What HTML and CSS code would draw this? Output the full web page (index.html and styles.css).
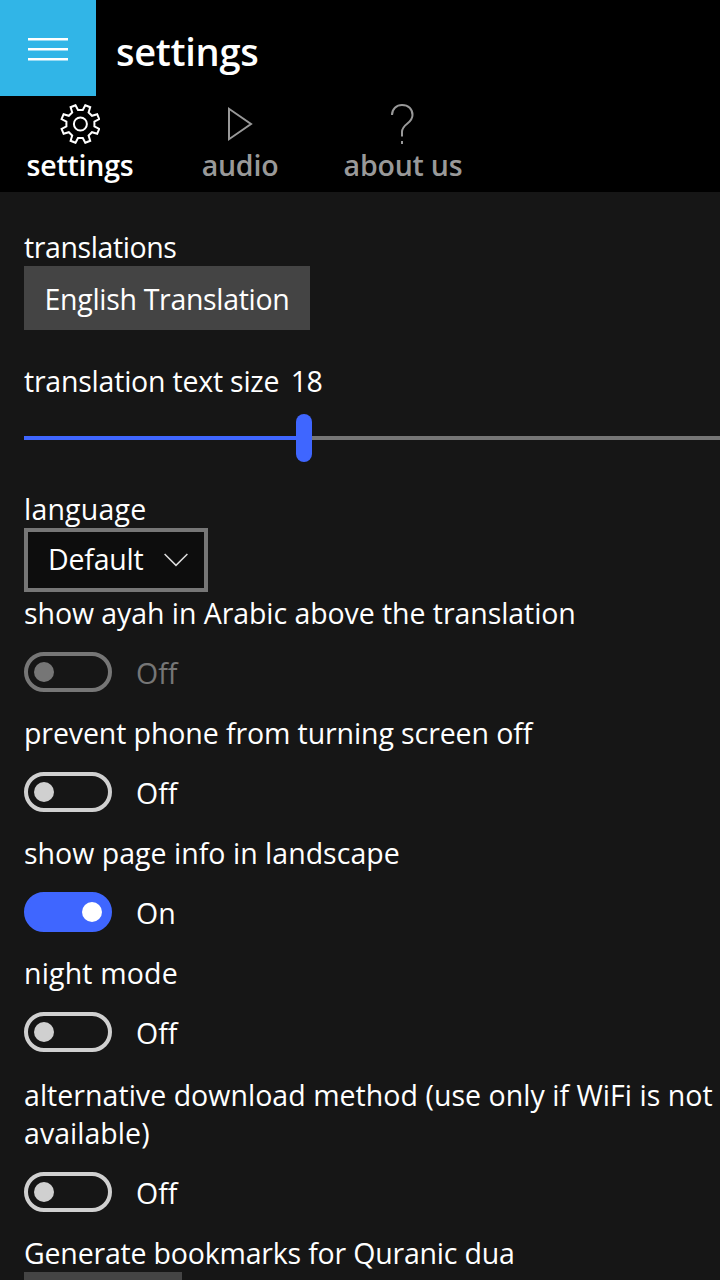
FILE: index.html
```html
<!DOCTYPE html>
<html lang="en">
<head>
<meta charset="utf-8">
<title>settings</title>
<link rel="stylesheet" href="styles.css">
</head>
<body>
<header class="topbar">
  <button class="menu" aria-label="Menu">
    <svg width="40" height="24" viewBox="0 0 40 24" fill="#fff"><path d="M0 0h40v2.6H0zM0 10h40v2.6H0zM0 20h40v2.6H0z"/></svg>
  </button>
  <h1 class="title">settings</h1>
</header>
<nav class="tabs">
  <a class="tab tab-settings active">
    <svg width="40" height="40" viewBox="-20.400 -20 40 40" fill="none" stroke="currentColor" stroke-width="2"><path d="M-4.9-18.8L-2.4-14L2.4-14L4.9-18.8L9.8-16.8L8.2-11.6L11.6-8.2L16.8-9.8L18.8-4.9L14-2.4L14 2.4L18.8 4.9L16.8 9.8L11.6 8.2L8.2 11.6L9.8 16.8L4.9 18.8L2.4 14L-2.4 14L-4.9 18.8L-9.8 16.8L-8.2 11.6L-11.6 8.2L-16.8 9.8L-18.8 4.9L-14 2.4L-14-2.4L-18.8-4.9L-16.8-9.8L-11.6-8.2L-8.2-11.6L-9.8-16.8Z"/><circle r="6.500"/></svg>
    <span>settings</span>
  </a>
  <a class="tab tab-audio">
    <svg width="40" height="40" viewBox="0 0 40 40" fill="none" stroke="currentColor" stroke-width="2"><path d="M9 4.8V35.200L31 20Z"/></svg>
    <span>audio</span>
  </a>
  <a class="tab tab-about">
    <svg width="40" height="40" viewBox="0 0 40 40" fill="none" stroke="currentColor" stroke-width="2"><path d="M9 11C9 5 13.500 1 19 1C25.500 1 29.500 5 29.500 11C29.500 20 19 19.500 19 28V32.500M19 37V40"/></svg>
    <span>about us</span>
  </a>
</nav>
<main class="content">
  <section class="group">
    <div class="label"><span class="t-translations">translations</span></div>
    <button class="button"><span class="t-english">English Translation</span></button>
  </section>
  <section class="group slider-group">
    <div class="label"><span class="t-size">translation text size</span><span class="value">18</span></div>
    <div class="slider"><div class="fill"></div><div class="thumb"></div><div class="track"></div></div>
  </section>
  <section class="group">
    <div class="label"><span class="t-language">language</span></div>
    <div class="select"><span class="t-default">Default</span>
      <svg width="24" height="14" viewBox="0 0 24 14" fill="none" stroke="#ddd" stroke-width="1.500"><path d="M.6 1L12 12.400L23.400 1"/></svg>
    </div>
  </section>
  <section class="setting disabled">
    <div class="label"><span class="t-ayah">show ayah in Arabic above the translation</span></div>
    <div class="switch-row"><div class="switch"><i class="knob"></i></div><span class="state">Off</span></div>
  </section>
  <section class="setting">
    <div class="label"><span class="t-prevent">prevent phone from turning screen off</span></div>
    <div class="switch-row"><div class="switch"><i class="knob"></i></div><span class="state">Off</span></div>
  </section>
  <section class="setting">
    <div class="label"><span class="t-page">show page info in landscape</span></div>
    <div class="switch-row"><div class="switch on"><i class="knob"></i></div><span class="state">On</span></div>
  </section>
  <section class="setting">
    <div class="label"><span class="t-night">night mode</span></div>
    <div class="switch-row"><div class="switch"><i class="knob"></i></div><span class="state">Off</span></div>
  </section>
  <section class="setting setting-tall">
    <div class="label"><span class="t-alt">alternative download method (use only if WiFi is not<br>available)</span></div>
    <div class="switch-row"><div class="switch"><i class="knob"></i></div><span class="state">Off</span></div>
  </section>
  <section class="group">
    <div class="label"><span class="t-generate">Generate bookmarks for Quranic dua</span></div>
    <div class="button generate"></div>
  </section>
</main>
</body>
</html>
```

FILE: styles.css
```css
* { box-sizing: border-box; }
html, body { margin: 0; height: 1280px; overflow: hidden; background: #161616; }
body { width: 720px; color: #fff; font: 28.500px/38px "Open Sans", "Noto Sans", sans-serif; }
svg { display: block; }
button { border: 0; padding: 0; margin: 0; color: inherit; font: inherit; }
.topbar { display: flex; height: 96px; background: #000; }
.menu { display: flex; width: 96px; height: 96px; padding: 38px 28px; background: #31b5e7; }
.title { margin: 0; padding: 26px 0 0 20px; font-size: 38px; line-height: 50px; font-weight: 600; letter-spacing: -.3px; white-space: nowrap; }
.tabs { display: flex; height: 96px; background: #000; color: #999; font-weight: 600; letter-spacing: -.2px; }
.tab { display: flex; flex-direction: column; align-items: center; width: 160px; padding-top: 8px; line-height: 38px; white-space: nowrap; }
.tab span { margin-top: 2px; }
.tab-about { width: 166px; }
.active { color: #fff; }
.content { padding: 36px 0 0 24px; }
.label { white-space: nowrap; }
.t-translations { letter-spacing: -.4px; }
.t-english { letter-spacing: -.32px; }
.t-size { letter-spacing: -.22px; }
.t-language { letter-spacing: .2px; }
.t-default { letter-spacing: -.2px; margin-top: -2px; }
.t-ayah { letter-spacing: -.07px; }
.t-prevent { letter-spacing: -.1px; }
.t-page { letter-spacing: .02px; }
.t-night { letter-spacing: .17px; }
.t-alt { letter-spacing: .04px; }
.t-generate { letter-spacing: -.19px; }
.button { display: flex; align-items: center; justify-content: center; width: 286px; height: 64px; padding-top: 2px; background: #444; }
.generate { width: 158px; }
.slider-group { margin-top: 32px; height: 128px; overflow: hidden; }
.value { margin-left: 11.500px; letter-spacing: -.5px; }
.slider { display: flex; align-items: center; height: 48px; margin-top: 14px; }
.fill { width: 272px; height: 4px; background: #3f66ff; }
.thumb { width: 16px; height: 48px; border-radius: 8px; background: #3f66ff; }
.track { flex: 1; height: 4px; background: #767676; }
.select { display: flex; align-items: center; justify-content: space-between; width: 184px; height: 64px; padding: 0 16px 0 20px; border: 4px solid #767676; background: #0d0d0d; }
.setting { padding: 2px 0 20px; }
.setting-tall { padding: 4px 0 22px; }
.switch-row { display: flex; align-items: center; gap: 24px; height: 40px; margin-top: 20px; }
.switch { display: flex; align-items: center; width: 88px; height: 40px; padding: 0 6px; border: 4px solid #d0d0d0; border-radius: 20px; color: #d0d0d0; }
.knob { width: 20px; height: 20px; border-radius: 50%; background: currentColor; }
.on { justify-content: flex-end; border-color: #3f66ff; background: #3f66ff; color: #fff; }
.state { margin-top: 2px; }
.disabled .switch { color: #767676; border-color: #767676; }
.disabled .state { color: #767676; }
```
